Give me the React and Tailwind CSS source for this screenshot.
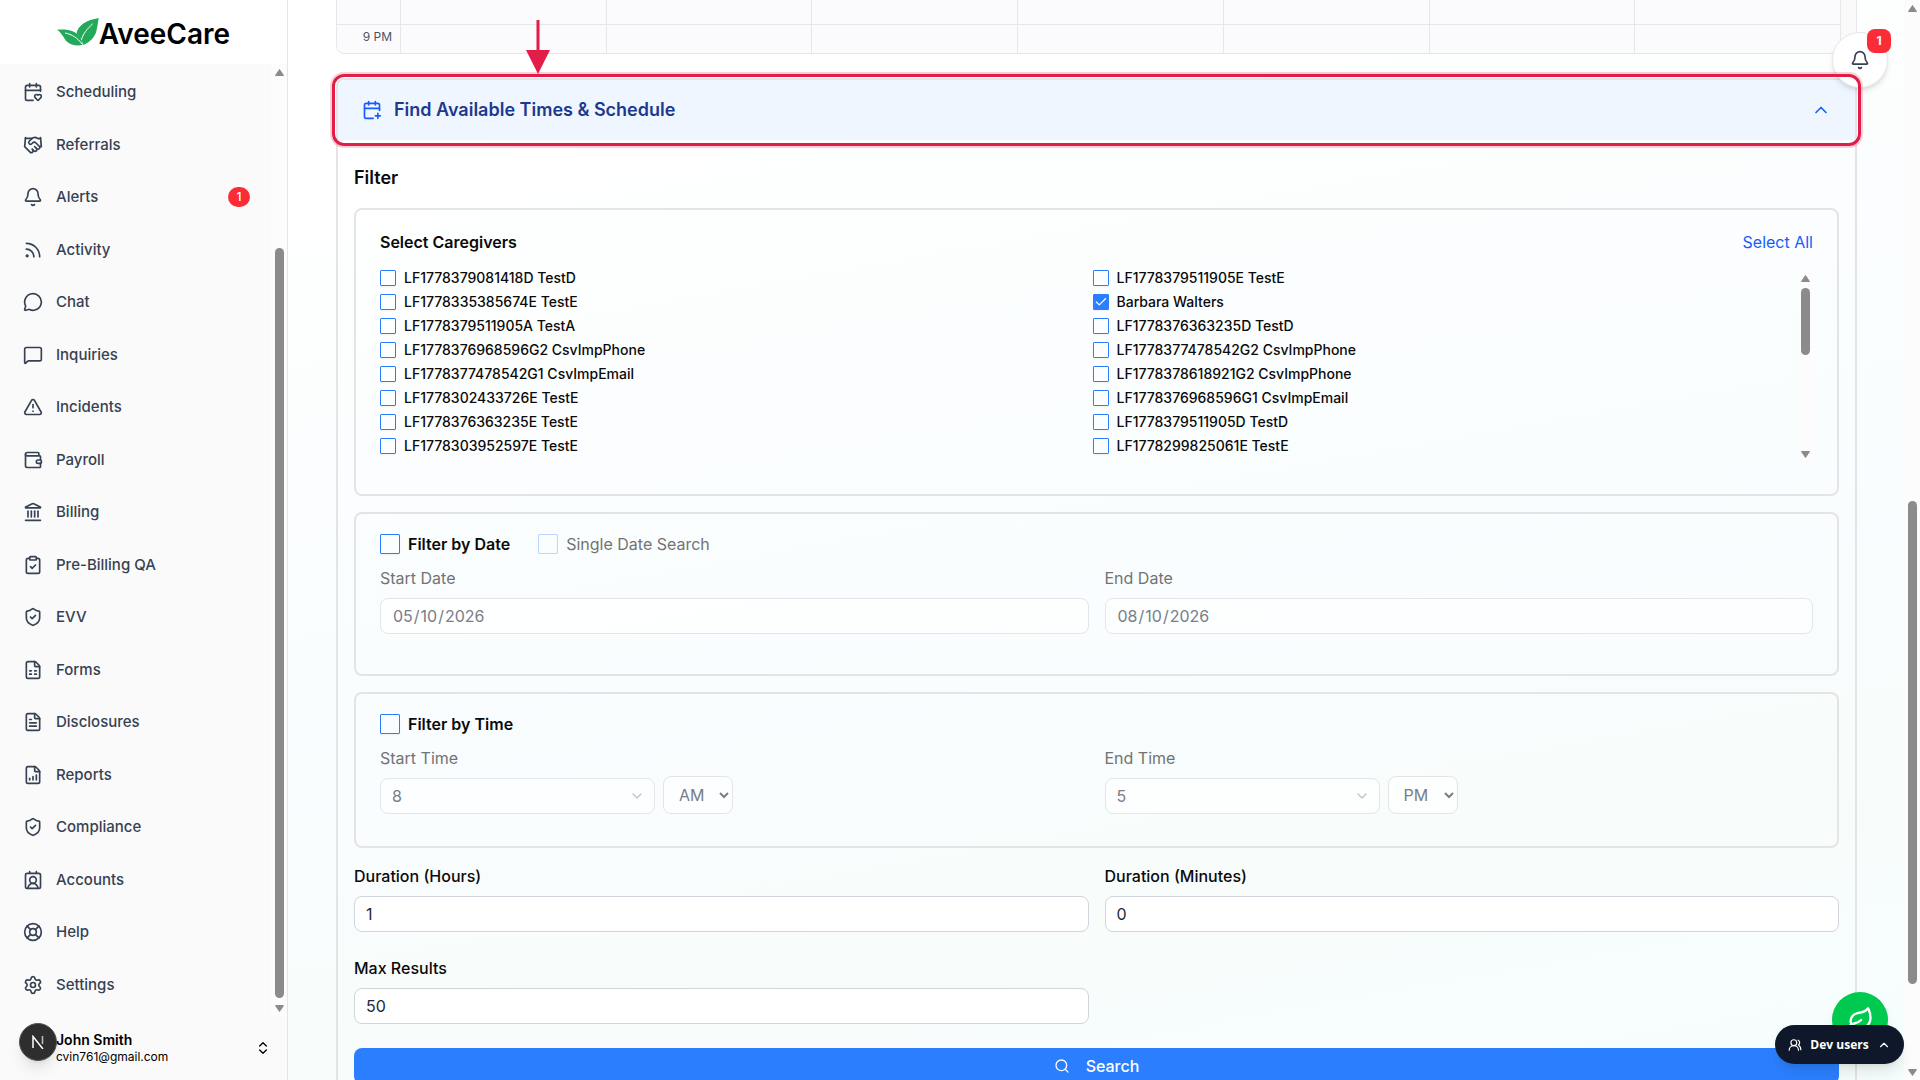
import { useState } from 'react'
import {
  CalendarHeart, Handshake, Bell, Rss, MessageCircle, MessageSquare, TriangleAlert, Landmark,
  ClipboardCheck, ShieldCheck, FileSpreadsheet, FileText, LifeBuoy, Settings, ChevronsUpDown,
  CalendarPlus, ChevronUp, ChevronDown, Search, Leaf, UsersRound, Check, Wallet, ContactRound,
  FileChartColumnIncreasing,
} from 'lucide-react'

const navItems = [
  { label: 'Scheduling', icon: CalendarHeart },
  { label: 'Referrals', icon: Handshake },
  { label: 'Alerts', icon: Bell, badge: 1 },
  { label: 'Activity', icon: Rss },
  { label: 'Chat', icon: MessageCircle },
  { label: 'Inquiries', icon: MessageSquare },
  { label: 'Incidents', icon: TriangleAlert },
  { label: 'Payroll', icon: Wallet },
  { label: 'Billing', icon: Landmark },
  { label: 'Pre-Billing QA', icon: ClipboardCheck },
  { label: 'EVV', icon: ShieldCheck },
  { label: 'Forms', icon: FileSpreadsheet },
  { label: 'Disclosures', icon: FileText },
  { label: 'Reports', icon: FileChartColumnIncreasing },
  { label: 'Compliance', icon: ShieldCheck },
  { label: 'Accounts', icon: ContactRound },
  { label: 'Help', icon: LifeBuoy },
  { label: 'Settings', icon: Settings },
]

const caregivers = [
  'LF1778379081418D TestD', 'LF1778379511905E TestE',
  'LF1778335385674E TestE', 'Barbara Walters',
  'LF1778379511905A TestA', 'LF1778376363235D TestD',
  'LF1778376968596G2 CsvImpPhone', 'LF1778377478542G2 CsvImpPhone',
  'LF1778377478542G1 CsvImpEmail', 'LF1778378618921G2 CsvImpPhone',
  'LF1778302433726E TestE', 'LF1778376968596G1 CsvImpEmail',
  'LF1778376363235E TestE', 'LF1778379511905D TestD',
  'LF1778303952597E TestE', 'LF1778299825061E TestE',
]

function Logo() {
  return (
    <svg viewBox="0 0 42 28" className="w-[42px] h-7" aria-hidden="true">
      <path d="M41.700 0C30 2 21 7 19.500 15.700C22.500 18 25 22 26.500 27C33 24 38 19 39.400 13C40.500 8 41 4 41.700 0Z" fill="#22a95a" />
      <path d="M0 11.700C10 11 17 12.500 20.500 16.500C24 19.500 25.500 23 25.500 27C20 28 14 27.500 9.500 23.300C7 20.500 5 15 0 11.700Z" fill="#22a95a" />
      <path d="M35.400 6C30 11 26 16 24.500 21.500M8.500 15C15 16.500 21 20 25 26" fill="none" stroke="#fff" strokeWidth="1" strokeLinecap="round" />
    </svg>
  )
}

// up/down arrows and thumb drawn like the desktop scrollbar
function ScrollBar({ className, children }) {
  return (
    <div className={`w-4 shrink-0 flex flex-col items-center bg-[#fcfcfc] ${className}`} aria-hidden="true">
      <svg viewBox="0 0 9 7" className="w-[9px] h-[7px] shrink-0"><path d="M4.500 0.500L8.500 6.500H0.500Z" fill="#8b8b8b" stroke="#8b8b8b" strokeLinejoin="round" /></svg>
      <div className="flex-1 w-full flex flex-col items-center">{children}</div>
      <svg viewBox="0 0 9 7" className="w-[9px] h-[7px] shrink-0"><path d="M4.500 6.500L8.500 0.500H0.500Z" fill="#8b8b8b" stroke="#8b8b8b" strokeLinejoin="round" /></svg>
    </div>
  )
}

function Tick({ id, label, checked, onChange, disabled, small }) {
  return (
    <div className="flex items-center gap-2">
      <span className={`relative shrink-0 ${small ? 'size-4' : 'size-5'} ${disabled ? 'opacity-30' : ''}`}>
        <input
          id={id}
          type="checkbox"
          checked={checked}
          onChange={onChange}
          disabled={disabled}
          className={`block size-full appearance-none rounded-[1px] border border-[#2b7fff] checked:bg-[#2b7fff] ${disabled ? '' : 'shadow-xs'}`}
        />
        {checked && <Check className="absolute inset-0 size-full p-px text-white pointer-events-none" />}
      </span>
      <label
        htmlFor={id}
        className={small ? 'text-sm leading-4 font-medium' : disabled ? 'text-base leading-5 text-[#737373]' : 'text-base leading-5 font-semibold'}
      >{label}</label>
    </div>
  )
}

function Sidebar() {
  return (
    <aside className="w-72 shrink-0 flex flex-col border-r border-[#e5e5e5] bg-[#fafafa]">
      <div className="h-16 shrink-0 flex items-center justify-center bg-white">
        <Logo />
        <span className="pt-1 text-[28px] leading-8 font-semibold text-black">AveeCare</span>
      </div>
      <div className="flex-1 min-h-0 flex">
        <nav className="flex-1 flex flex-col pt-0.5 pb-[5px]">
          {navItems.map(n => (
            <a key={n.label} href="#" className="flex-1 flex items-center gap-[13px] pl-[23px] pr-[21px] text-[15px] font-medium text-[#364153]">
              <n.icon className="size-5" />
              <span className="flex-1">{n.label}</span>
              {n.badge && <span className="w-[22px] h-5 rounded-full bg-[#fb2c36] text-white text-xs leading-5 text-center">{n.badge}</span>}
            </a>
          ))}
        </nav>
        <ScrollBar className="pt-[5px] pb-1">
          <div className="w-[9px] grow mt-[172px] mb-[7px] rounded-full bg-[#8b8b8b]" />
        </ScrollBar>
      </div>
      <button className="relative h-16 shrink-0 flex items-center pl-14 pr-4 text-left text-black">
        <span className="absolute left-[19px] top-[7px] size-[38px] rounded-full bg-[#2e2e2e] border border-[#555] shadow-lg grid place-items-center">
          <svg viewBox="0 0 14 14" className="size-3.5" fill="none" stroke="#fff" strokeWidth="1.5" aria-hidden="true">
            <path d="M2 13V1.500L12 14" /><path d="M11.500 1V9" strokeOpacity=".7" />
          </svg>
        </span>
        <span className="flex-1">
          <span className="block text-sm leading-[18px] font-semibold">John Smith</span>
          <span className="block text-xs leading-4">cvin761@gmail.com</span>
        </span>
        <ChevronsUpDown className="size-4" />
      </button>
    </aside>
  )
}

function CalendarTail() {
  const days = [0, 1, 2, 3, 4, 5, 6]
  return (
    <div className="h-[54px] flex rounded-b-lg border-x border-b border-[#e5e7eb] bg-[#fafafa] overflow-hidden">
      <div className="flex-1 flex flex-col bg-[#fbfbfe]">
        {['', '9 PM'].map(hour => (
          <div key={hour} className={`flex ${hour ? 'h-[29px]' : 'h-6 border-b border-[#e5e7eb] box-content'}`}>
            <div className="w-16 pr-2 text-right text-xs leading-6 text-[#4a5565] border-r border-[#e5e7eb]">{hour}</div>
            {days.map(d => <div key={d} className="flex-1 border-r border-[#e5e7eb]" />)}
          </div>
        ))}
      </div>
      <div className="w-[15px]" />
    </div>
  )
}

const field = 'block w-full h-9 rounded-lg border px-[11px] text-base'
const fieldOn = `${field} border-[#d1d5dc] bg-white text-[#1e2939]`
const fieldOff = `${field} border-[#e2e5ea] bg-white/70 text-[#787d87]`
const card = 'rounded-lg border-2 border-[#e4e4e4] px-6'

function HourPick({ id, label, hour, half }) {
  return (
    <div>
      <label htmlFor={id} className="block text-base text-[#737373]">{label}</label>
      <div className="mt-1.5 flex items-end gap-2">
        <div className="relative w-[275px]">
          <select id={id} disabled defaultValue={hour} className={`${fieldOff} appearance-none opacity-100`}>
            {[1, 2, 3, 4, 5, 6, 7, 8, 9, 10, 11, 12].map(h => <option key={h}>{h}</option>)}
          </select>
          <ChevronDown className="absolute right-2.5 top-2.5 size-4 text-[#bfc3ca] pointer-events-none" />
        </div>
        <select aria-label={`${label} period`} disabled defaultValue={half} className="w-[70px] h-[38px] pl-[11px] rounded-lg border border-[#e2e5ea] bg-white/70 text-base text-[#787d87] opacity-100">
          <option>AM</option>
          <option>PM</option>
        </select>
      </div>
    </div>
  )
}

function FindTimes() {
  const [picked, setPicked] = useState(['Barbara Walters'])
  const [byDate, setByDate] = useState(false)
  const [byTime, setByTime] = useState(false)

  const toggle = (name) => {
    setPicked(prev => prev.includes(name) ? prev.filter(p => p !== name) : [...prev, name])
  }

  return (
    <section className="relative mt-6 border-2 border-[#e4e4e4] rounded-lg">
      <button className="w-full h-15 flex items-center gap-3 px-6 rounded-t-md bg-[#eff6ff] text-[#1c398e]">
        <CalendarPlus className="size-5 text-[#155dfc]" />
        <span className="flex-1 text-left text-lg font-semibold">Find Available Times &amp; Schedule</span>
        <ChevronUp className="size-5 text-[#155dfc]" />
      </button>
      {/* callout around the header */}
      <div className="absolute z-30 -inset-x-1.5 -top-1.5 h-[72px] rounded-xl border-3 border-[#e11d48] ring-2 ring-[#e11d48]/20 pointer-events-none" />
      <svg viewBox="0 0 24 54" className="absolute z-30 left-[188px] -top-[60px] w-6 h-[54px]" aria-hidden="true">
        <path d="M10.500 0H13.500V30H24L12 54L0 30H10.500Z" fill="#e11d48" />
      </svg>

      <div className="px-4 pt-6 pb-4">
        <h2 className="text-lg font-semibold leading-7">Filter</h2>

        <div className={`${card} mt-4 pt-5 pb-8`}>
          <div className="flex justify-between">
            <h3 className="font-semibold">Select Caregivers</h3>
            <button className="text-[#155dfc]">Select All</button>
          </div>
          <div className="mt-4 h-48 flex overflow-hidden">
            <div className="flex-1 grid grid-cols-2 gap-2 content-start">
              {caregivers.map((name, i) => (
                <Tick key={name} small id={`cg-${i}`} label={name} checked={picked.includes(name)} onChange={() => toggle(name)} />
              ))}
            </div>
            <ScrollBar className="pt-[5px] pb-1">
              <div className="w-[9px] h-[67px] mt-1.5 rounded-full bg-[#8b8b8b]" />
            </ScrollBar>
          </div>
        </div>

        <div className={`${card} mt-4 pt-5 pb-10`}>
          <div className="flex gap-7">
            <Tick id="by-date" label="Filter by Date" checked={byDate} onChange={e => setByDate(e.target.checked)} />
            <Tick id="single-date" label="Single Date Search" checked={false} onChange={() => {}} disabled />
          </div>
          <div className="mt-3 grid grid-cols-2 gap-4">
            <div>
              <label htmlFor="start-date" className="block text-base text-[#737373]">Start Date</label>
              <input id="start-date" type="date" disabled defaultValue="2026-05-10" className={`${fieldOff} mt-2 [&::-webkit-calendar-picker-indicator]:hidden`} />
            </div>
            <div>
              <label htmlFor="end-date" className="block text-base text-[#737373]">End Date</label>
              <input id="end-date" type="date" disabled defaultValue="2026-08-10" className={`${fieldOff} mt-2 [&::-webkit-calendar-picker-indicator]:hidden`} />
            </div>
          </div>
        </div>

        <div className={`${card} mt-4 pt-5 pb-8`}>
          <Tick id="by-time" label="Filter by Time" checked={byTime} onChange={e => setByTime(e.target.checked)} />
          <div className="mt-3 grid grid-cols-2 gap-4">
            <HourPick id="start-time" label="Start Time" hour="8" half="AM" />
            <HourPick id="end-time" label="End Time" hour="5" half="PM" />
          </div>
        </div>

        <div className="mt-4 grid grid-cols-2 gap-x-4 gap-y-6">
          <div>
            <label htmlFor="hours" className="block font-medium">Duration (Hours)</label>
            <input id="hours" defaultValue="1" className={`${fieldOn} mt-2`} />
          </div>
          <div>
            <label htmlFor="minutes" className="block font-medium">Duration (Minutes)</label>
            <input id="minutes" defaultValue="0" className={`${fieldOn} mt-2`} />
          </div>
          <div>
            <label htmlFor="max" className="block font-medium">Max Results</label>
            <input id="max" defaultValue="50" className={`${fieldOn} mt-2`} />
          </div>
        </div>

        <button className="mt-6 w-full h-9 rounded-lg bg-[#2b7fff] text-white font-medium flex items-center justify-center gap-4">
          <Search className="size-4" />
          Search
        </button>
      </div>
    </section>
  )
}

export default function App() {
  return (
    <div className="relative h-screen flex overflow-hidden bg-white text-[#0a0a0a] font-['Inter',sans-serif]">
      <Sidebar />
      <main className="flex-1 min-w-0 overflow-hidden pl-12 pr-[47px] bg-[linear-gradient(170deg,#ffffff_10%,#fcfefe_30%,#f9fdff_55%,#f8fcfb_75%,#f6fefd_95%)]">
        <CalendarTail />
        <FindTimes />
      </main>
      <ScrollBar className="pt-[5px] pb-1">
        <div className="w-[9px] h-[483px] mt-[489px] rounded-full bg-[#8b8b8b]" />
      </ScrollBar>

      <button aria-label="Notifications" className="absolute z-20 right-8 top-8 size-14 rounded-full border border-[#e5e7eb] bg-white text-[#364153] shadow-md grid place-items-center">
        <Bell className="size-5" />
        <span className="absolute -right-1 -top-1 size-6 rounded-lg bg-[#fb2c36] text-white text-xs leading-6 font-bold text-center">1</span>
      </button>
      <button aria-label="Assistant" className="absolute z-20 right-8 bottom-8 size-14 rounded-full bg-[#00c950] text-white shadow-lg grid place-items-center">
        <Leaf className="size-7" />
      </button>
      <button className="absolute z-30 right-4 bottom-4 h-[39px] w-[129px] rounded-full bg-[#0f172a] text-white shadow-lg flex items-center justify-center gap-2 text-xs font-bold font-['Open_Sans',sans-serif]">
        <UsersRound className="size-3.5" />
        Dev users
        <ChevronUp className="size-3.5" />
      </button>
    </div>
  )
}
